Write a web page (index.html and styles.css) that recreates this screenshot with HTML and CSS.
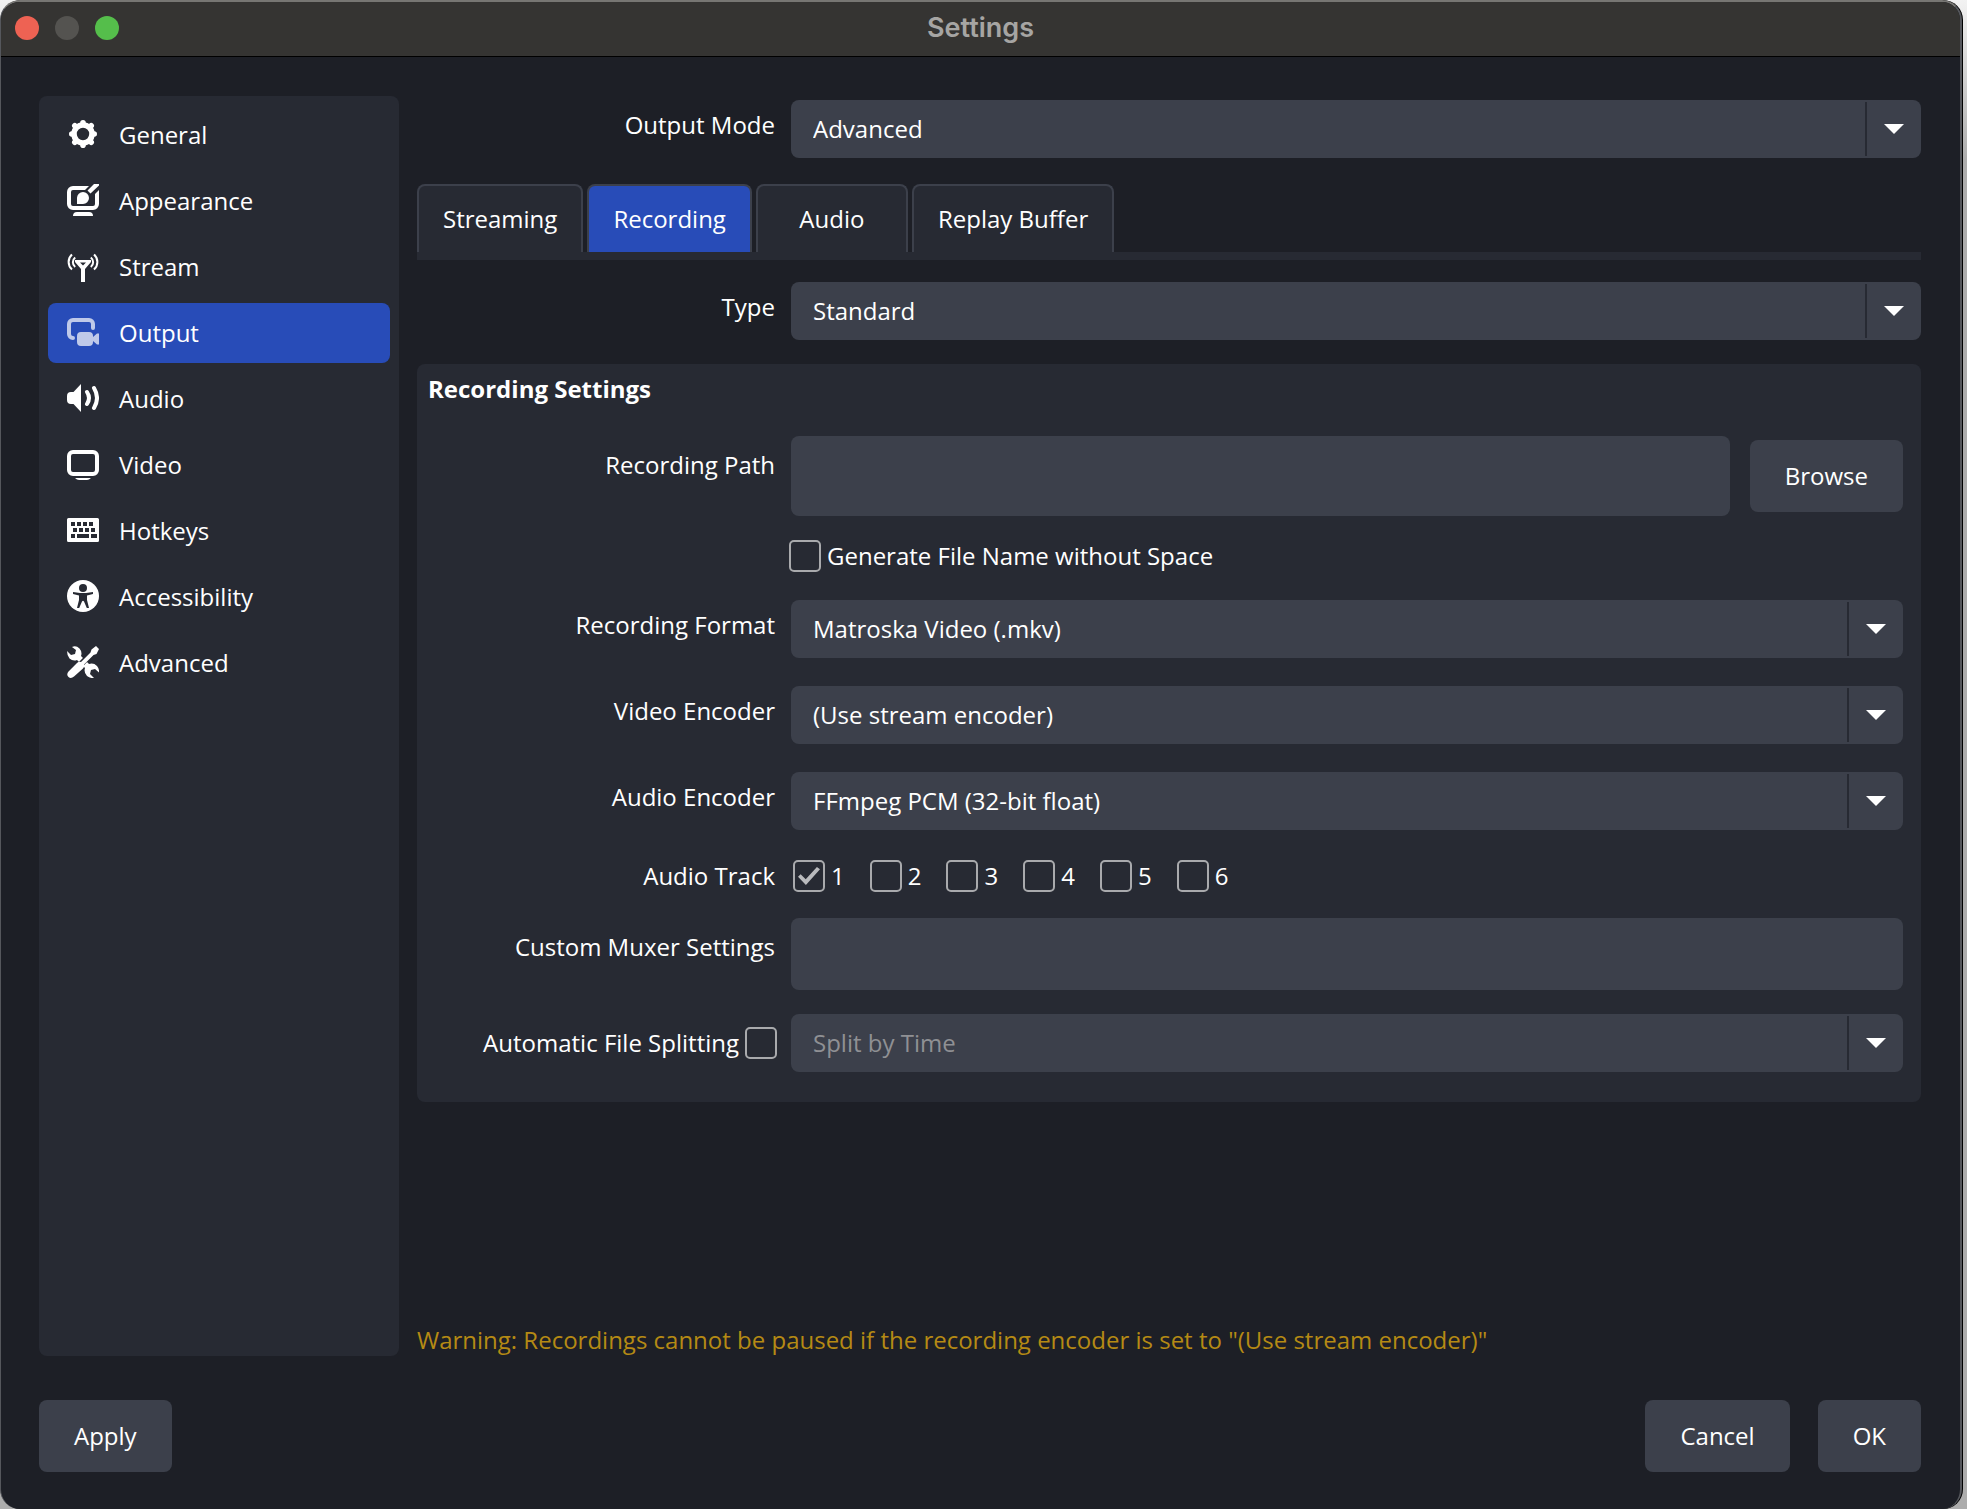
FILE: index.html
```html
<!DOCTYPE html>
<html lang="en">
<head>
    <meta charset="UTF-8">
    <meta name="viewport" content="width=device-width, initial-scale=1.0">
    <title>Settings</title>
    <link rel="stylesheet" href="styles.css">
</head>
<body>
    <div class="window">
        <header class="titlebar">
            <div class="lights">
                <button class="light close" type="button" aria-label="Close"></button>
                <button class="light minimize" type="button" aria-label="Minimize" disabled></button>
                <button class="light zoom" type="button" aria-label="Zoom"></button>
            </div>
            <h1>Settings</h1>
        </header>

        <form class="content">
            <div class="columns">
                <nav class="sidebar">
                    <a href="#general">
                        <svg viewBox="0 0 32 32">
                            <circle cx="16" cy="16" r="9" fill="none" stroke="currentColor" stroke-width="5.6"/>
                            <path d="M16 5V4.8M16 27v.2M5 16h-.2M27 16h.2M8.2 8.2l-.4-.4M23.8 8.2l.4-.4M8.2 23.8l-.4.4M23.8 23.8l.4.4" fill="none" stroke="currentColor" stroke-width="5.6" stroke-linecap="round"/>
                        </svg>
                        General
                    </a>
                    <a href="#appearance">
                        <svg viewBox="0 0 32 32">
                            <path d="M22 2H6a6 6 0 0 0-6 6v12a6 6 0 0 0 6 6h20a6 6 0 0 0 6-6V6l-4 4v10a2 2 0 0 1-2 2H6a2 2 0 0 1-2-2V8a2 2 0 0 1 2-2h12z"/>
                            <path d="M10 20v-6a6 6 0 1 1 6 6zM27 0h5v1.5l-8.5 8-3-3zM6 32q0-4 4-4h12q4 0 4 4z"/>
                        </svg>
                        Appearance
                    </a>
                    <a href="#stream">
                        <svg viewBox="0 0 32 32">
                            <path fill-rule="evenodd" d="M8 10h16v2l-6 7v13h-4V19l-6-7zM13 12.6l3 3 3-3z"/>
                            <path d="M5 4.5a10 10 0 0 0 0 15M8.2 7.5a6 6 0 0 0 0 9.5M27 4.5a10 10 0 0 1 0 15M23.8 7.5a6 6 0 0 1 0 9.5" fill="none" stroke="currentColor" stroke-width="2"/>
                        </svg>
                        Stream
                    </a>
                    <a href="#output" class="active">
                        <svg viewBox="0 0 32 32">
                            <path d="M6 22a4 4 0 0 1-4-4V8a4 4 0 0 1 4-4h16a4 4 0 0 1 4 4v4" fill="none" stroke="currentColor" stroke-width="4" stroke-linecap="round"/>
                            <path class="camera" d="M14 16h8a4 4 0 0 1 4 4v1l4-3.5h2v11h-2L26 25v1a4 4 0 0 1-4 4h-8a4 4 0 0 1-4-4v-6a4 4 0 0 1 4-4z"/>
                        </svg>
                        Output
                    </a>
                    <a href="#audio">
                        <svg viewBox="0 0 32 32">
                            <path d="M0 14q0-4 4-4h2.5L14 2v28l-7.5-8H4q-4 0-4-4z"/>
                            <path d="M20 10q4 6 0 12M27 6q6 10 0 20" fill="none" stroke="currentColor" stroke-width="4" stroke-linecap="round"/>
                        </svg>
                        Audio
                    </a>
                    <a href="#video">
                        <svg viewBox="0 0 32 32">
                            <rect x="2" y="4" width="28" height="22" rx="4" fill="none" stroke="currentColor" stroke-width="4"/>
                            <path d="M8 30h16q-2 2-4 2h-8q-2 0-4-2z"/>
                        </svg>
                        Video
                    </a>
                    <a href="#hotkeys">
                        <svg viewBox="0 0 32 32">
                            <path fill-rule="evenodd" d="M1.500 4h29A1.500 1.500 0 0 1 32 5.500v21a1.500 1.500 0 0 1-1.500 1.500h-29A1.500 1.500 0 0 1 0 26.500v-21A1.500 1.500 0 0 1 1.500 4zM4 8v4h4V8zM10 8v4h4V8zM16 8v4h4V8zM22 8v4h4V8zM6 14v4h4v-4zM12 14v4h4v-4zM18 14v4h4v-4zM24 14v4h4v-4zM4 20v4h4v-4zM10 20v4h12v-4zM24 20v4h6v-4z"/>
                        </svg>
                        Hotkeys
                    </a>
                    <a href="#accessibility">
                        <svg viewBox="0 0 32 32">
                            <circle cx="16" cy="16" r="16"/>
                            <g class="cutout">
                                <circle cx="16" cy="8" r="4"/>
                                <path d="M6 12l7 1h6l7-1v2l-6 1.5V20l2 8h-2.2L17 21.500q-1-1.500-2 0L12.200 28H10l2-8v-4.500L6 14z"/>
                            </g>
                        </svg>
                        Accessibility
                    </a>
                    <a href="#advanced">
                        <svg viewBox="0 0 32 32">
                            <path d="M5 1q4-2 7.500 1.500Q15.500 6 14 10l8 8q4.500-1.500 8 2 2.500 3 2 6.500l-4-3.500-4 1-1 4 4 4q-4 .5-7-2-3.500-3.500-2-8l-8-8q-4 1.500-7.500-1.500Q0 9.500 0 5l4 4 4-1 1-4z"/>
                            <path class="gap" d="M9 23L28 4"/>
                            <path d="M29 0l3 3-2.500 5-3 1-9.500 9.500q1 2-1 4L7 30.500q-3 2.500-5.500.5-2.500-2.500 0-5.500L10 17q2-2 4-1L23.500 6.500l1-3z"/>
                        </svg>
                        Advanced
                    </a>
                </nav>

                <main class="page">
                    <div class="row">
                        <label for="output-mode">Output Mode</label>
                        <div class="dropdown">
                            <select id="output-mode">
                                <option>Advanced</option>
                                <option>Simple</option>
                            </select>
                        </div>
                    </div>

                    <div class="tabs" role="tablist">
                        <button type="button" role="tab">Streaming</button>
                        <button type="button" role="tab" class="active" aria-selected="true">Recording</button>
                        <button type="button" role="tab">Audio</button>
                        <button type="button" role="tab">Replay Buffer</button>
                    </div>

                    <div class="row">
                        <label for="type">Type</label>
                        <div class="dropdown">
                            <select id="type">
                                <option>Standard</option>
                                <option>Custom Output (FFmpeg)</option>
                            </select>
                        </div>
                    </div>

                    <section class="group">
                        <h2>Recording Settings</h2>
                        <div class="fields">
                            <div class="row tall">
                                <label for="path">Recording Path</label>
                                <div class="path">
                                    <input class="text path-input" type="text" id="path">
                                    <button class="btn" type="button">Browse</button>
                                </div>
                            </div>
                            <div class="row spaced">
                                <label class="check no-label"><input type="checkbox">Generate File Name without Space</label>
                            </div>
                            <div class="row spaced">
                                <label for="format">Recording Format</label>
                                <div class="dropdown">
                                    <select id="format">
                                        <option>Matroska Video (.mkv)</option>
                                    </select>
                                </div>
                            </div>
                            <div class="row spaced">
                                <label for="video-encoder">Video Encoder</label>
                                <div class="dropdown">
                                    <select id="video-encoder">
                                        <option>(Use stream encoder)</option>
                                    </select>
                                </div>
                            </div>
                            <div class="row spaced">
                                <label for="audio-encoder">Audio Encoder</label>
                                <div class="dropdown">
                                    <select id="audio-encoder">
                                        <option>FFmpeg PCM (32-bit float)</option>
                                    </select>
                                </div>
                            </div>
                            <div class="row middle">
                                <span class="name">Audio Track</span>
                                <div class="tracks">
                                    <label class="check"><input type="checkbox" checked>1</label>
                                    <label class="check"><input type="checkbox">2</label>
                                    <label class="check"><input type="checkbox">3</label>
                                    <label class="check"><input type="checkbox">4</label>
                                    <label class="check"><input type="checkbox">5</label>
                                    <label class="check"><input type="checkbox">6</label>
                                </div>
                            </div>
                            <div class="row tall">
                                <label for="muxer">Custom Muxer Settings</label>
                                <input class="text" type="text" id="muxer">
                            </div>
                            <div class="row spaced">
                                <label class="check split">Automatic File Splitting<input type="checkbox"></label>
                                <div class="dropdown">
                                    <select aria-label="Split mode" disabled>
                                        <option>Split by Time</option>
                                    </select>
                                </div>
                            </div>
                        </div>
                    </section>

                    <p class="warning">Warning: Recordings cannot be paused if the recording encoder is set to "(Use stream encoder)"</p>
                </main>
            </div>

            <footer class="actions">
                <button class="btn" type="button">Apply</button>
                <button class="btn cancel" type="button">Cancel</button>
                <button class="btn" type="submit">OK</button>
            </footer>
        </form>
    </div>
</body>
</html>
```
FILE: styles.css
```css
* {
    box-sizing: border-box;
}
body {
    margin: 0;
    padding-right: 5px;
    background: linear-gradient(#f2f2f2, #adadad 160px);
    color: #ffffff;
    font-family: "Open Sans", "Noto Sans", sans-serif;
    font-size: 24px;
    line-height: 30px;
}
button,
input,
select {
    font: inherit;
    color: inherit;
    border: none;
    margin: 0;
}
.window {
    display: flex;
    flex-direction: column;
    min-height: 100vh;
    background-color: #1d1f26;
    border: 1px solid #55575c;
    border-top: 2px solid #777673;
    border-right-width: 2px;
    border-bottom: none;
    border-radius: 20px;
    box-shadow: 1px 0 0 #000000;
    overflow: hidden;
}

/* Title bar */
.titlebar {
    display: grid;
    grid-template-columns: 1fr auto 1fr;
    align-items: center;
    height: 55px;
    padding: 0 14px 2px;
    background-color: #353432;
    border-bottom: 1px solid #000000;
}
.titlebar h1 {
    margin: 0;
    font-family: Inter, sans-serif;
    font-size: 27px;
    font-weight: 600;
    color: #a6a5a3;
}
.lights {
    display: flex;
    gap: 16px;
}
.light {
    width: 24px;
    height: 24px;
    padding: 0;
    border-radius: 50%;
}
.close {
    background-color: #ee6253;
}
.minimize {
    background-color: #545350;
}
.zoom {
    background-color: #55be4b;
}

/* Layout */
.content {
    display: flex;
    flex: 1;
    flex-direction: column;
    gap: 44px;
    padding: 39px 39px 37px 38px;
}
.columns {
    display: flex;
    flex: 1;
    gap: 18px;
}
.page {
    display: flex;
    flex: 1;
    flex-direction: column;
    padding-top: 4px;
}

/* Sidebar */
.sidebar {
    display: flex;
    flex-direction: column;
    gap: 6px;
    width: 360px;
    padding: 9px;
    background-color: #272a33;
    border-radius: 8px;
}
.sidebar a {
    display: flex;
    align-items: center;
    gap: 20px;
    height: 60px;
    padding: 0 19px;
    border-radius: 8px;
    color: #ffffff;
    text-decoration: none;
}
.sidebar a.active {
    background-color: #284cb8;
}
.sidebar svg {
    width: 32px;
    height: 32px;
    margin-bottom: 2px;
    fill: currentColor;
}
.sidebar .active svg {
    opacity: 0.7;
}
.camera {
    stroke: #284cb8;
    stroke-width: 3;
    paint-order: stroke;
}
.cutout {
    fill: #272a33;
}
.gap {
    fill: none;
    stroke: #272a33;
    stroke-width: 6;
}

/* Form rows */
.row {
    display: grid;
    grid-template-columns: 360px minmax(0, 1fr);
    column-gap: 14px;
}
.group .row {
    grid-template-columns: 342px minmax(0, 1fr);
}
.row > label,
.row > .name {
    padding: 10px 2px 0 0;
    text-align: right;
}
.tall > label {
    padding-top: 14px;
}
.middle {
    align-items: center;
    height: 36px;
}
.row > .name {
    padding-top: 0;
}
.spaced {
    padding-bottom: 4px;
}
.dropdown {
    position: relative;
    height: 58px;
}
.dropdown select {
    width: 100%;
    height: 100%;
    padding: 0 64px 0 22px;
    appearance: none;
    background-color: #3c404b;
    border-radius: 8px;
}
.dropdown select:disabled {
    color: #8f9094;
    opacity: 1;
}
.dropdown::before {
    content: "";
    position: absolute;
    top: 2px;
    bottom: 2px;
    right: 54px;
    width: 2px;
    background-color: #272a33;
}
.dropdown::after {
    content: "";
    position: absolute;
    top: 24px;
    right: 17px;
    width: 20px;
    height: 10px;
    background-color: #ffffff;
    clip-path: polygon(0 0, 100% 0, 50% 100%);
    pointer-events: none;
}
.text {
    width: 100%;
    height: 72px;
    padding: 0 22px;
    background-color: #3c404b;
    border-radius: 8px;
}
.path {
    display: flex;
    align-items: center;
    gap: 20px;
}
.path-input {
    flex: 1;
    height: 80px;
}

/* Tabs */
.tabs {
    display: flex;
    gap: 4px;
    margin: 26px 0 22px;
    border-bottom: 8px solid #272a33;
}
.tabs button {
    min-width: 152px;
    height: 68px;
    padding: 0 24px;
    background-color: #272a33;
    border: 2px solid #3c404b;
    border-bottom: none;
    border-radius: 8px 8px 0 0;
}
.tabs .active {
    background-color: #284cb8;
}

/* Recording settings */
.group {
    margin-top: 24px;
    padding: 10px 18px 26px;
    background-color: #272a33;
    border-radius: 8px;
}
.group h2 {
    margin: 0 -7px 32px;
    font-size: 24px;
    font-weight: 700;
}
.fields {
    display: flex;
    flex-direction: column;
    gap: 24px;
}
.row > .check,
.check {
    display: flex;
    align-items: center;
    gap: 6px;
    padding: 0;
}
.row > .no-label {
    grid-column: 2;
    justify-self: start;
    margin-left: -2px;
}
.row > .split {
    justify-content: flex-end;
}
.check input {
    display: grid;
    place-items: center;
    width: 32px;
    height: 32px;
    appearance: none;
    border: 2px solid #a9aaad;
    border-radius: 5px;
}
.check input:checked::before {
    content: "";
    width: 22px;
    height: 18px;
    background-color: #b9babd;
    clip-path: polygon(0 54%, 12% 40%, 35% 68%, 86% 0, 100% 12%, 36% 100%);
}
.tracks {
    display: flex;
    gap: 25px;
    padding-left: 2px;
}
.warning {
    margin: auto 0 1px;
    color: #b58a14;
}

/* Buttons */
.btn {
    height: 72px;
    padding: 0 35px;
    background-color: #3c404b;
    border-radius: 8px;
}
.actions {
    display: flex;
    gap: 28px;
}
.cancel {
    margin-left: auto;
}
```
